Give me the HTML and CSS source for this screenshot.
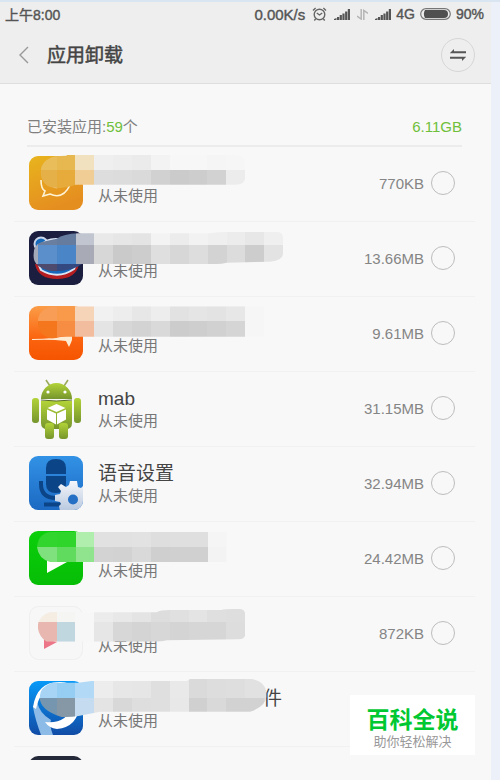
FILE: index.html
```html
<!DOCTYPE html>
<html lang="zh-CN">
<head>
    <meta charset="UTF-8">
    <meta name="viewport" content="width=device-width, initial-scale=1">
    <title>应用卸载</title>
    <link rel="stylesheet" href="styles.css">
</head>
<body>
    <div class="screen">
        <header class="top">
            <div class="status-bar">
                <span class="time">上午8:00</span>
                <div class="status-right">
                    <span class="speed">0.00K/s</span>
                    <svg class="alarm" width="15" height="14" viewBox="0 0 15 14" fill="none" stroke="#666" stroke-width="1.4">
                        <circle cx="7.5" cy="7.5" r="5.3"/>
                        <path d="M4.8 6l2.700 2 2.700-2M1 3.400L3.600 1M14 3.400L11.400 1M3.600 12L2.300 13.500M11.400 12l1.300 1.500"/>
                    </svg>
                    <svg class="signal" width="16" height="11" viewBox="0 0 16 11" fill="#555">
                        <path d="M0 11V10l2.500-1v2zM3 8h2.200v3H3zM5.700 6h2.200v5H5.700zM8.400 4.500h2.200V11H8.400zM11.100 2.500h2.200V11h-2.200zM13.800 0H16v11h-2.200z"/>
                    </svg>
                    <svg class="transfer" width="11" height="11" viewBox="0 0 11 11" fill="none" stroke="#b5b5b5" stroke-width="1.5">
                        <path d="M4.200 0v10L0 7M6.800 11V1.500L11 4.500"/>
                    </svg>
                    <svg class="signal" width="16" height="11" viewBox="0 0 16 11" fill="#555">
                        <path d="M0 11V10l2.500-1v2zM3 8h2.200v3H3zM5.700 6h2.200v5H5.700zM8.400 4.500h2.200V11H8.400zM11.100 2.500h2.200V11h-2.200zM13.800 0H16v11h-2.200z"/>
                    </svg>
                    <span class="network">4G</span>
                    <svg class="battery" width="31" height="12" viewBox="0 0 31 12">
                        <rect x="0.7" y="0.7" width="29.6" height="10.6" rx="5.3" fill="#eee" stroke="#777" stroke-width="1.2"/>
                        <path d="M5 2h19a4 4 0 010 8H5a8 8 0 010-8z" fill="#505050"/>
                    </svg>
                    <span class="percent">90%</span>
                </div>
            </div>
            <div class="title-bar">
                <button class="back" aria-label="返回">
                    <svg width="12" height="18" viewBox="0 0 12 18" fill="none" stroke="#999" stroke-width="1.4">
                        <path d="M10 1L2 9l8 8"/>
                    </svg>
                </button>
                <h1>应用卸载</h1>
                <button class="sort" aria-label="排序">
                    <svg width="16" height="12" viewBox="0 0 16 12" fill="#555">
                        <path d="M0 4L4 0v2.300h12V4.200H0zM16 8L12 12V9.700H0V7.800h16z"/>
                    </svg>
                </button>
            </div>
        </header>

        <main>
            <div class="summary">
                <span>已安装应用:<span class="green">59</span>个</span>
                <span class="green">6.11GB</span>
            </div>

            <ul class="apps">
                <li class="app">
                    <svg class="icon" viewBox="0 0 54 54">
                        <defs><linearGradient id="g1" x2="0.4" y2="1"><stop stop-color="#e8b41d"/><stop offset="1" stop-color="#e58e20"/></linearGradient></defs>
                        <rect width="54" height="54" rx="9" fill="url(#g1)"/>
                        <path d="M12 24Q12 33 16 35l-2 5 7-2q13 6 20-9" fill="none" stroke="#fff3d5" stroke-width="1.6"/>
                        <path d="M24 30q4 3 7 0" fill="none" stroke="#fff3d5" stroke-width="1.6"/>
                    </svg>
                    <div class="info"><div class="name"></div><div class="usage">从未使用</div></div>
                    <label class="size" for="app1">770KB</label>
                    <input type="checkbox" id="app1">
                    <svg class="mosaic" data-row="0" viewBox="42 0 900 225">
                        <clipPath id="m0"><path d="M122 75Q122 40 165 28L200 26V23H700Q736 25 736 45V90Q736 113 705 113H227Q165 132 140 115Q122 100 122 75z"/></clipPath>
                    </svg>
                </li>
                <li class="app">
                    <svg class="icon" viewBox="0 0 54 54">
                        <rect width="54" height="54" rx="9" fill="#1c1e40"/>
                        <path d="M6 33q3 15 22 15t22-15z" fill="#b61d20"/>
                        <circle cx="12" cy="13" r="6.5" fill="#1769ba" stroke="#cbd7e8" stroke-width="2"/>
                        <path d="M9 32Q4 18 17 10Q30 5 42 13Q53 26 45 38Q29 49 12 39z" fill="#1768bb" stroke="#dbe6f5" stroke-width="2"/>
                    </svg>
                    <div class="info"><div class="name"></div><div class="usage">从未使用</div></div>
                    <label class="size" for="app2">13.66MB</label>
                    <input type="checkbox" id="app2">
                    <svg class="mosaic" data-row="1" viewBox="42 0 900 225">
                        <clipPath id="m1"><path d="M100 100Q100 68 125 60L170 50Q190 36 235 34H630Q650 29 700 29H830Q849 29 849 50V95Q849 115 810 119L680 122Q665 126 650 126H245Q220 148 160 148Q100 140 100 100z"/></clipPath>
                    </svg>
                </li>
                <li class="app">
                    <svg class="icon" viewBox="0 0 54 54">
                        <defs><linearGradient id="g3" x2="0" y2="1"><stop stop-color="#fb9d48"/><stop offset="0.6" stop-color="#fb640f"/><stop offset="1" stop-color="#f55400"/></linearGradient></defs>
                        <rect width="54" height="54" rx="9" fill="url(#g3)"/>
                        <path d="M3 33q22 0 40-4v5q-1 3-3 7l-3-6q-16-2-34-1z" fill="#ffead2"/>
                    </svg>
                    <div class="info"><div class="name"></div><div class="usage">从未使用</div></div>
                    <label class="size" for="app3">9.61MB</label>
                    <input type="checkbox" id="app3">
                    <svg class="mosaic" data-row="2" viewBox="42 0 900 225">
                        <clipPath id="m2"><path d="M113 75Q115 30 170 28H792V119H180Q160 128 145 122Q113 110 113 75z"/></clipPath>
                    </svg>
                </li>
                <li class="app">
                    <svg class="icon" viewBox="0 0 54 54">
                        <defs><linearGradient id="g4" x2="0" y2="1"><stop stop-color="#b3d338"/><stop offset="1" stop-color="#76952d"/></linearGradient></defs>
                        <path d="M17-1l4 6M39-1l-4 6" stroke="#9aac5b" stroke-width="1.6"/>
                        <g fill="url(#g4)">
                            <path d="M12 18a15.500 16 0 0131 0z"/>
                            <path d="M12 20h31v22q0 6-6 6H18q-6 0-6-6z"/>
                            <rect x="3" y="17" width="7" height="25" rx="3"/>
                            <rect x="45" y="17" width="7" height="25" rx="3"/>
                            <rect x="16" y="42" width="9" height="16" rx="3"/>
                            <rect x="30" y="42" width="9" height="16" rx="3"/>
                        </g>
                        <path d="M12 19q15 2 31 0" fill="none" stroke="#566b1f"/>
                        <circle cx="19" cy="11" r="1.6" fill="#fff"/><circle cx="36" cy="11" r="1.6" fill="#fff"/>
                        <path d="M27.500 23l9 4-9 4-9-4zM18 28.500l9 4v11l-9-5zM37 28.500l-9 4v11l9-5z" fill="#fff"/>
                    </svg>
                    <div class="info"><div class="name">mab</div><div class="usage">从未使用</div></div>
                    <label class="size" for="app4">31.15MB</label>
                    <input type="checkbox" id="app4">
                </li>
                <li class="app">
                    <svg class="icon" viewBox="0 0 54 54">
                        <defs>
                            <linearGradient id="g5" x2="0" y2="1"><stop stop-color="#3292e5"/><stop offset="1" stop-color="#1c69c2"/></linearGradient>
                            <linearGradient id="g5b" x2="0" y2="1"><stop stop-color="#f5f6fa"/><stop offset="1" stop-color="#b8c8df"/></linearGradient>
                            <clipPath id="c5"><rect width="54" height="54" rx="9"/></clipPath>
                        </defs>
                        <g clip-path="url(#c5)">
                            <rect width="54" height="54" fill="url(#g5)"/>
                            <path d="M17 18V12q0-9 10-9t10 9v6zM17 20h20v8q0 9-10 9t-10-9z" fill="#0b4587"/>
                            <path d="M12 25v3q0 14 15 14M15 48.500h17" fill="none" stroke="#0b4587" stroke-width="4"/>
                            <path d="M41 25h7l1 6 3 1 3-3v26H31l-1-5 2-2-1-2-5-1v-6l5-1 1-3-3-4 3-3 5 3 3-2z" fill="url(#g5b)"/>
                            <circle cx="44" cy="43.5" r="5" fill="#256fc4"/>
                        </g>
                    </svg>
                    <div class="info"><div class="name">语音设置</div><div class="usage">从未使用</div></div>
                    <label class="size" for="app5">32.94MB</label>
                    <input type="checkbox" id="app5">
                </li>
                <li class="app">
                    <svg class="icon" viewBox="0 0 54 54">
                        <defs><linearGradient id="g6" x2="0" y2="1"><stop stop-color="#0bd00b"/><stop offset="1" stop-color="#06bd06"/></linearGradient></defs>
                        <rect width="54" height="54" rx="9" fill="url(#g6)"/>
                        <path d="M18 28v14l20-11V28z" fill="#fff"/>
                    </svg>
                    <div class="info"><div class="name"></div><div class="usage">从未使用</div></div>
                    <label class="size" for="app6">24.42MB</label>
                    <input type="checkbox" id="app6">
                    <svg class="mosaic" data-row="5" viewBox="42 0 900 225">
                        <clipPath id="m5"><path d="M111 75Q115 35 150 30H680V120H150Q115 110 111 75z"/></clipPath>
                    </svg>
                </li>
                <li class="app">
                    <svg class="icon" viewBox="0 0 54 54">
                        <rect x="0.5" y="0.5" width="53" height="53" rx="9" fill="#f7f7f7" stroke="#efefef"/>
                        <path d="M15 33v10l13-7z" fill="#ec7588"/>
                    </svg>
                    <div class="info"><div class="name"></div><div class="usage">从未使用</div></div>
                    <label class="size" for="app7">872KB</label>
                    <input type="checkbox" id="app7">
                    <svg class="mosaic" data-row="6" viewBox="42 0 900 225">
                        <clipPath id="m6"><path d="M113 90Q115 55 150 46H470Q480 39 510 39H665Q670 36 700 36H720Q736 37 736 55V110Q736 127 715 127L500 130Q490 134 460 134H140Q117 120 113 90z"/></clipPath>
                    </svg>
                </li>
                <li class="app">
                    <svg class="icon" viewBox="0 0 54 54">
                        <defs>
                            <linearGradient id="g8" x2="0" y2="1"><stop stop-color="#0799f8"/><stop offset="1" stop-color="#114ca6"/></linearGradient>
                            <clipPath id="c8"><rect width="54" height="54" rx="9"/></clipPath>
                        </defs>
                        <g clip-path="url(#c8)">
                            <rect width="54" height="54" fill="url(#g8)"/>
                            <path d="M4 26Q6 38 12 54h12q-4-10-2-15Q10 32 8 20z" fill="#8bbbe6"/>
                            <path d="M4 26Q8 0 32 1Q50 2 51 23Q49 46 28 48Q20 47 16 41Q38 43 42 26Q42 7 26 6Q11 8 7 28z" fill="#fff"/>
                        </g>
                    </svg>
                    <div class="info"><div class="name name-tail">件</div><div class="usage">从未使用</div></div>
                    <input type="checkbox" id="app8" aria-label="选择">
                    <svg class="mosaic" data-row="7" viewBox="42 0 900 225">
                        <clipPath id="m7"><path d="M119 75Q120 45 155 32H235L275 27H560L570 21H755Q800 30 800 70Q798 105 750 119H300L235 132Q215 136 185 135Q119 115 119 75z"/></clipPath>
                    </svg>
                </li>
                <li class="app app-cut">
                    <svg class="icon" viewBox="0 0 54 54"><rect width="54" height="54" rx="9" fill="#252a3b"/></svg>
                </li>
            </ul>
        </main>

        <aside class="badge">
            <div class="badge-title">百科全说</div>
            <div class="badge-text">助你轻松解决</div>
        </aside>
    </div>

    <script src="mosaic.js"></script>
</body>
</html>
```
FILE: styles.css
```css
* {
    box-sizing: border-box;
}

body {
    margin: 0;
    background: #ebf0f9;
    border-top: 2px solid #d9e5f1;
    color: #444;
    font-family: "Liberation Sans", "Noto Sans CJK SC", sans-serif;
    font-size: 15px;
}

button {
    padding: 0;
    border: none;
    background: none;
}

.screen {
    position: relative;
    margin-right: 9px;
    padding-bottom: 20px;
    background: #f8f8f8;
}

/* header */
.top {
    background: #eee;
    border-bottom: 1px solid #dedede;
}

.status-bar {
    display: flex;
    justify-content: space-between;
    align-items: center;
    height: 24px;
    padding: 0 7px 0 5px;
    color: #555;
    -webkit-text-stroke: 0.4px #555;
}

.time,
.network,
.percent {
    font-size: 14px;
}

.status-right {
    display: flex;
    align-items: center;
    gap: 5px;
}

.alarm {
    margin: 0 2px;
}

.transfer {
    margin: 0 2px;
}

.title-bar {
    display: flex;
    align-items: center;
    height: 57px;
    padding: 0 16px 0 18px;
}

.back,
.sort {
    display: flex;
    align-items: center;
    justify-content: center;
}

.title-bar h1 {
    flex: 1;
    margin: 0 0 0 17px;
    padding-top: 2px;
    font-size: 19px;
    font-weight: 400;
    line-height: 28px;
    -webkit-text-stroke: 0.5px #444;
}

.sort {
    width: 34px;
    height: 34px;
    border: 1px solid #d6d6d6;
    border-radius: 50%;
}

/* summary line */
.summary {
    display: flex;
    justify-content: space-between;
    align-items: flex-end;
    height: 63px;
    margin: 0 29px 0 27px;
    padding-bottom: 7px;
    border-bottom: 2px solid #ececec;
    color: #808080;
    line-height: 22px;
}

.green {
    color: #6fbf3a;
}

/* app list */
.apps {
    margin: 0 16px 0 14px;
    padding: 0;
    list-style: none;
}

.app {
    position: relative;
    display: flex;
    align-items: center;
    height: 75px;
    padding: 9px 20px 11px 15px;
    border-bottom: 1px solid #f1f1f1;
}

.icon {
    flex: none;
    width: 54px;
    height: 54px;
    overflow: visible;
}

.info {
    flex: 1;
    margin-left: 15px;
    padding-top: 4px;
}

.name {
    height: 22px;
    font-size: 19px;
    line-height: 22px;
}

.name-tail {
    padding-left: 165px;
}

.usage {
    color: #777;
    line-height: 22px;
}

.size {
    color: #858585;
}

.app input {
    flex: none;
    width: 24px;
    height: 24px;
    margin: 0 0 0 7px;
    border: 1px solid #bdbdbd;
    border-radius: 50%;
    background: #f8f8f8;
    appearance: none;
}

.app input:checked {
    background: #6fbf3a;
}

/* pixelated strip over the app names */
.mosaic {
    position: absolute;
    left: 0;
    top: 0;
    width: 300px;
    height: 75px;
    pointer-events: none;
}

.app-cut {
    align-items: flex-start;
    height: 13px;
    padding-bottom: 0;
    border: none;
    overflow: hidden;
}

/* corner badge */
.badge {
    position: absolute;
    right: 16px;
    bottom: 25px;
    width: 125px;
    padding: 12px 0 4px;
    background: #fff;
    text-align: center;
}

.badge-title {
    color: #00c832;
    font-size: 23px;
    font-weight: bold;
    line-height: 26px;
}

.badge-text {
    color: #999;
    font-size: 13px;
    line-height: 18px;
}
```
FILE: mosaic.js
```js
// from: x of the first cell, ys: row edges, rows: cell colours left to right
const mosaics = {
  0: {
    from: 113, ys: [23, 69, 132],
    rows: [
      'e8bd5a e8b850 f2e1bf efefef ededed ebebeb f3f3f3 f7f7f7 f7f7f7 f5f5f5 f6f6f6',
      'e6b048 e6ab3a efcd95 dddddd dcdcdc dadada d1d1d1 cbcbcb cdcdcd d2d2d2 ececec',
    ]
  },
  1: {
    from: 57, ys: [29, 69, 126, 150],
    rows: [
      'a5aab8 6a7f9f 667c9f c0c5cf e9e9e9 e6e6e6 e4e4e4 f3f3f3 ececec f2f2f2 efefef ececec e7e7e7 efefef',
      'a5aab8 5b8fcb 4985c7 a8abb6 d7d7d7 cacaca cdcdcd dfdfdf d7d7d7 dddddd d3d3d3 dcdcdc cdcdcd e3e3e3',
      '44496e 4d4a6e 34497f 34497f',
    ]
  },
  2: {
    from: 113, ys: [28, 71, 130],
    rows: [
      'f89d56 f99a4b f6d4b8 f1f1f1 ededed e7e7e7 ededed e2e2e2 e5e5e5 e3e3e3 e7e7e7 f6f6f6',
      'f4761d f78c43 f1bd9e e4e4e4 d7d7d7 d3d3d3 d9d9d9 cccccc cecece d1d1d1 d5d5d5 f6f6f6',
    ]
  },
  5: {
    from: 57, ys: [30, 75, 120],
    rows: [
      '31d52d 31d52d 2fd52a b0eeae e1e1e1 e1e1e1 e2e2e2 dedede dfdfdf dfdfdf f5f5f5',
      '7fe17d 7fe17d 60db5e 8fe48d d3d3d3 d2d2d2 d9d9d9 cfcfcf d0d0d0 d0d0d0 f3f3f3',
    ]
  },
  6: {
    from: 113, ys: [36, 76, 136],
    rows: [
      'f5ece2 f5f5f3 f7f7f7 ececec e8e8e8 e4e4e4 dddddd e0e0e0 e4e4e4 dfdfdf dedede',
      'e8b7b0 c1d7df f7f7f7 e6e6e6 d7d7d7 d4d4d4 d7d7d7 d4d4d4 d6d6d6 d6d6d6 dddddd',
    ]
  },
  7: {
    from: 113, ys: [21, 77, 138],
    rows: [
      'a7d4f4 96cdf3 b2d9f6 ededed e7e7e7 e6e6e6 dfdfdf e9e9e9 dadada dddddd dedede e1e1e1 e1e1e1',
      '7596ae 8697a5 c5dcf0 e4e4e4 d8d8d8 dedede dfdfdf e8e8e8 d0d0d0 d9d9d9 d2d2d2 d2d2d2 d8d8d8',
    ]
  },
};

const cell = 56.6;
const ns = 'http://www.w3.org/2000/svg';

for (const svg of document.querySelectorAll('.mosaic')) {
  const id = svg.dataset.row;
  const mosaic = mosaics[id];
  const group = document.createElementNS(ns, 'g');
  group.setAttribute('clip-path', `url(#m${id})`);
  mosaic.rows.forEach((row, r) => {
    row.split(' ').forEach((color, c) => {
      const rect = document.createElementNS(ns, 'rect');
      rect.setAttribute('x', mosaic.from + c * cell);
      rect.setAttribute('y', mosaic.ys[r]);
      rect.setAttribute('width', cell);
      rect.setAttribute('height', mosaic.ys[r + 1] - mosaic.ys[r]);
      rect.setAttribute('fill', '#' + color);
      rect.setAttribute('shape-rendering', 'crispEdges');
      group.appendChild(rect);
    });
  });
  svg.appendChild(group);
}
```
